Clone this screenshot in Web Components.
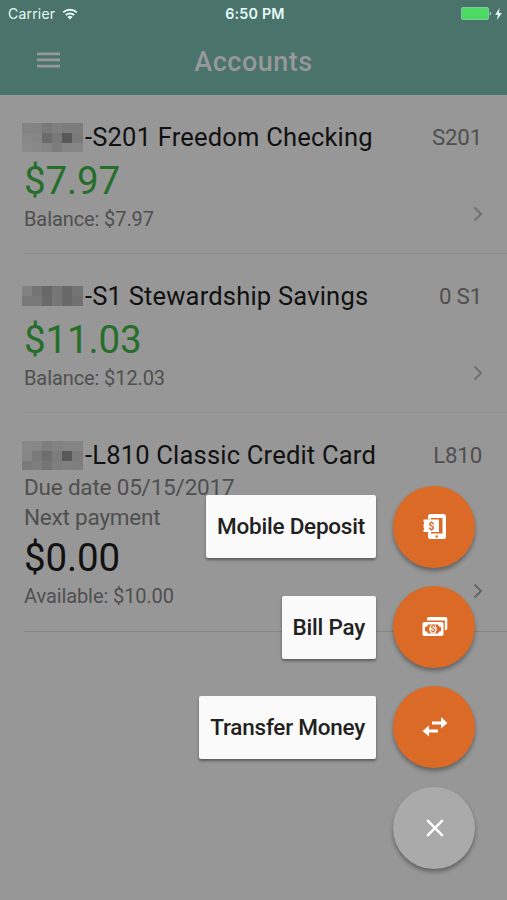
<!DOCTYPE html>
<html lang="en">
<head>
<meta charset="utf-8">
<title>Accounts</title>
<style>
  body {
    margin: 0;
    font-family: Roboto, "Liberation Sans", sans-serif;
  }
</style>
</head>
<body>
<accounts-app></accounts-app>

<script>
class StatusBar extends HTMLElement {
  constructor() {
    super();
    this.attachShadow({ mode: "open" });
  }

  connectedCallback() {
    this.shadowRoot.innerHTML = `
      <style>
        :host {
          display: grid;
          grid-template-columns: 1fr auto 1fr;
          align-items: center;
          height: 27px;
          padding: 0 5px 0 8px;
          box-sizing: border-box;
          color: #e6fbf6;
          font-family: Inter, "Liberation Sans", sans-serif;
          font-size: 14px;
        }
        .left, .right { display: flex; align-items: center; }
        .left { gap: 7px; letter-spacing: .2px; }
        .right { justify-content: flex-end; gap: 3px; }
        .time { font-weight: 600; font-size: 14.3px; letter-spacing: .2px; }
        svg { display: block; }
      </style>
      <div class="left">
        <span>Carrier</span>
        <svg width="16" height="12" viewBox="0 0 16 12" fill="none" stroke="#e6fbf6" stroke-width="2">
          <path d="M1.2 4.4a9.8 9.8 0 0 1 13.6 0"/>
          <path d="M3.8 7.1a6 6 0 0 1 8.4 0"/>
          <path d="M8 11.4L5.4 8.9a3.8 3.8 0 0 1 5.2 0z" fill="#e6fbf6" stroke="none"/>
        </svg>
      </div>
      <span class="time">6:50 PM</span>
      <div class="right">
        <svg width="31" height="13" viewBox="0 0 31 13">
          <rect x=".5" y=".5" width="27" height="12" rx="1.5" fill="#4cd964" stroke="#7fc99a"/>
          <path d="M28.8 4.5a2.2 2.2 0 0 1 0 4z" fill="#a9dcc8"/>
        </svg>
        <svg width="7" height="12" viewBox="0 0 7 12"><path d="M4.6 0L.2 6.8h2.7L2 12l4.8-7H4z" fill="#e6fbf6"/></svg>
      </div>
    `;
  }
}
customElements.define("status-bar", StatusBar);

class AppHeader extends HTMLElement {
  constructor() {
    super();
    this.attachShadow({ mode: "open" });
  }

  connectedCallback() {
    this.shadowRoot.innerHTML = `
      <style>
        :host {
          display: block;
          height: 95px;
          background: #4a736c;
          color: #97989a;
        }
        .bar {
          display: grid;
          grid-template-columns: 1fr auto 1fr;
          align-items: center;
          height: 66px;
          padding: 0 37px;
        }
        h1 {
          margin: 0;
          padding-top: 3px;
          font-size: 27px;
          font-weight: 500;
          letter-spacing: .5px;
        }
        svg { display: block; }
      </style>
      <status-bar></status-bar>
      <div class="bar">
        <svg width="23" height="16" viewBox="0 0 23 16" fill="#97989a">
          <path d="M0 .5h23v2.7H0zM0 6.6h23v2.7H0zM0 12.7h23v2.7H0z"/>
        </svg>
        <h1><slot></slot></h1>
      </div>
    `;
  }
}
customElements.define("app-header", AppHeader);

// Pixelated block covering the account number, one hex digit pair per cell
class MaskedNumber extends HTMLElement {
  constructor() {
    super();
    this.attachShadow({ mode: "open" });
  }

  connectedCallback() {
    const rows = this.getAttribute("rows").split("/").map(r => r.split(" "));
    const heights = this.getAttribute("heights");
    const cells = rows.flat().map(c => `<i style="background:#${c}${c}${c}"></i>`).join("");

    this.shadowRoot.innerHTML = `
      <style>
        :host {
          display: grid;
          grid-template-columns: repeat(5, 10px) 11px;
          grid-template-rows: ${heights};
        }
      </style>
      ${cells}
    `;
  }
}
customElements.define("masked-number", MaskedNumber);

class AccountRow extends HTMLElement {
  constructor() {
    super();
    this.attachShadow({ mode: "open" });
  }

  connectedCallback() {
    const name = this.getAttribute("name");
    const code = this.getAttribute("code");
    const amount = this.getAttribute("amount");
    const balance = this.getAttribute("balance");
    const credit = this.hasAttribute("credit");

    this.shadowRoot.innerHTML = `
      <style>
        :host {
          display: block;
          box-sizing: border-box;
          margin-left: 24px;
          padding: 25px 20px 0 0;
          height: 159px;
          border-bottom: 1px solid #8e8e8e;
          color: #4f4f4f;
          white-space: nowrap;
        }
        :host([credit]) { height: 219px; border-color: #868686; }
        .top, .name, .bottom { display: flex; }
        .top, .bottom { justify-content: space-between; }
        .top { height: 34px; line-height: 34px; }
        .name {
          margin-left: -2px;
          color: #111;
          font-size: 25.5px;
          letter-spacing: .2px;
        }
        .name span { margin-left: 2px; }
        .code { padding-right: 5px; font-size: 22.3px; letter-spacing: -.2px; }
        .line { height: 29.5px; line-height: 30px; font-size: 22.5px; letter-spacing: -.2px; }
        .amount {
          height: 52px;
          line-height: 53px;
          color: ${credit ? "#111" : "#256f2b"};
          font-size: 38.5px;
          letter-spacing: -.15px;
        }
        :host([credit]) .amount { line-height: 54px; }
        .bottom { height: 26px; line-height: 26px; font-size: 20px; letter-spacing: -.1px; }
        svg { display: block; margin-right: 4px; }
      </style>
      <div class="top">
        <div class="name"><slot></slot><span>${name}</span></div>
        <span class="code">${code}</span>
      </div>
      ${credit ? `<div class="line">Due date 05/15/2017</div><div class="line">Next payment</div>` : ""}
      <div class="amount">${amount}</div>
      <div class="bottom">
        <span>${balance}</span>
        <svg width="10" height="16" viewBox="0 0 10 16" fill="none" stroke="${credit ? "#666" : "#707070"}" stroke-width="2">
          <path d="M1.5 1.5L8 8l-6.5 6.5"/>
        </svg>
      </div>
    `;
  }
}
customElements.define("account-row", AccountRow);

class FabAction extends HTMLElement {
  constructor() {
    super();
    this.attachShadow({ mode: "open" });
  }

  connectedCallback() {
    const label = this.getAttribute("label");

    this.shadowRoot.innerHTML = `
      <style>
        :host {
          display: flex;
          justify-content: flex-end;
          align-items: center;
          gap: 17px;
          height: 82px;
        }
        .label {
          height: 63px;
          padding: 0 11px;
          border-radius: 2px;
          background: #fafafa;
          box-shadow: 0 2px 3px rgba(0, 0, 0, .4);
          color: #212121;
          font-size: 22.5px;
          font-weight: 500;
          line-height: 63px;
          letter-spacing: -.23px;
          white-space: nowrap;
        }
        .button {
          display: flex;
          align-items: center;
          justify-content: center;
          width: 82px;
          height: 82px;
          border-radius: 50%;
          background: var(--fab-color, #db6a27);
          box-shadow: 0 3px 4px rgba(0, 0, 0, .35);
        }
      </style>
      ${label ? `<span class="label">${label}</span>` : ""}
      <div class="button"><slot></slot></div>
    `;
  }
}
customElements.define("fab-action", FabAction);

class FabMenu extends HTMLElement {
  constructor() {
    super();
    this.attachShadow({ mode: "open" });
  }

  connectedCallback() {
    this.shadowRoot.innerHTML = `
      <style>
        :host {
          position: absolute;
          right: 32px;
          bottom: 31.5px;
          display: flex;
          flex-direction: column;
          gap: 18.2px;
        }
        svg { display: block; margin-left: 1px; }
        .close { --fab-color: #aaa; }
      </style>
      <fab-action label="Mobile Deposit">
        <svg width="24" height="26" viewBox="0 0 24 26">
          <path fill="#fff" d="M7.5 0h13A2.5 2.5 0 0 1 23 2.5v20a2.5 2.5 0 0 1-2.5 2.5h-13A2.5 2.5 0 0 1 5 22.5V18h3v1.5h11.5V4H8v1.500H5v-3A2.5 2.5 0 0 1 7.5 0z"/>
          <path fill="#fff" d="M.5 5.5H16V18H.5v-2.2a1.5 1.5 0 0 0 0-2.600v-2.800a1.5 1.5 0 0 0 0-2.600z"/>
          <circle cx="13.7" cy="22.5" r="1.2" fill="#db6a27"/>
          <text x="8.5" y="15.5" text-anchor="middle" font-family="Roboto" font-size="10.5" font-weight="700" fill="#db6a27">$</text>
        </svg>
      </fab-action>
      <fab-action label="Bill Pay">
        <svg width="26" height="20" viewBox="0 0 26 20">
          <path fill="#fff" d="M6.5 0h17a1.8 1.8 0 0 1 1.8 1.8v9.7a1.8 1.8 0 0 1-1.8 1.8h-.7V3.500H5v-2A1.5 1.5 0 0 1 6.5 0z"/>
          <rect x=".5" y="5" width="21" height="14" rx="1.8" fill="#fff"/>
          <path fill="#db6a27" d="M6 7.5h10a3 3 0 0 0 3 2.500v4a3 3 0 0 0-3 2.500H6A3 3 0 0 0 3 14v-4a3 3 0 0 0 3-2.500z"/>
          <ellipse cx="11" cy="12" rx="3.8" ry="4.6" fill="#fff"/>
          <text x="11" y="15.2" text-anchor="middle" font-family="Roboto" font-size="9" font-weight="700" fill="#db6a27">$</text>
        </svg>
      </fab-action>
      <fab-action label="Transfer Money">
        <svg width="26" height="20" viewBox="0 0 26 20" fill="#fff">
          <path d="M10 4.500h9V0l6.500 6L19 11.500V7.500h-9zM16 12.500H7V8.500L.5 14 7 19.500v-4h9z"/>
        </svg>
      </fab-action>
      <fab-action class="close">
        <svg width="18" height="18" viewBox="0 0 18 18" stroke="#fff" stroke-width="2.4">
          <path d="M1.2 1.2l15.6 15.6M16.8 1.2L1.2 16.8"/>
        </svg>
      </fab-action>
    `;
  }
}
customElements.define("fab-menu", FabMenu);

class AccountsApp extends HTMLElement {
  constructor() {
    super();
    this.attachShadow({ mode: "open" });
  }

  connectedCallback() {
    this.shadowRoot.innerHTML = `
      <style>
        :host {
          display: block;
          position: relative;
          height: 900px;
          overflow: hidden;
          background: #979797;
        }
        masked-number { align-self: flex-start; margin-top: 3px; }
        .short { margin-top: 7px; }
      </style>
      <app-header>Accounts</app-header>
      <account-row name="-S201 Freedom Checking" code="S201" amount="$7.97" balance="Balance: $7.97">
        <masked-number heights="10px 10px 9px" rows="84 82 7a 80 7c 7c/88 86 6c 78 58 7a/8a 88 84 7c 84 86"></masked-number>
      </account-row>
      <account-row name="-S1 Stewardship Savings" code="0 S1" amount="$11.03" balance="Balance: $12.03">
        <masked-number class="short" heights="10px 10px" rows="82 74 68 76 68 74/78 78 6a 76 68 70"></masked-number>
      </account-row>
      <account-row credit name="-L810 Classic Credit Card" code="L810" amount="$0.00" balance="Available: $10.00">
        <masked-number heights="10px 10px 9px" rows="88 86 7e 82 84 84/86 7a 6e 7c 58 7c/7a 7e 74 7e 80 7e"></masked-number>
      </account-row>
      <fab-menu></fab-menu>
    `;
  }
}
customElements.define("accounts-app", AccountsApp);
</script>
</body>
</html>
